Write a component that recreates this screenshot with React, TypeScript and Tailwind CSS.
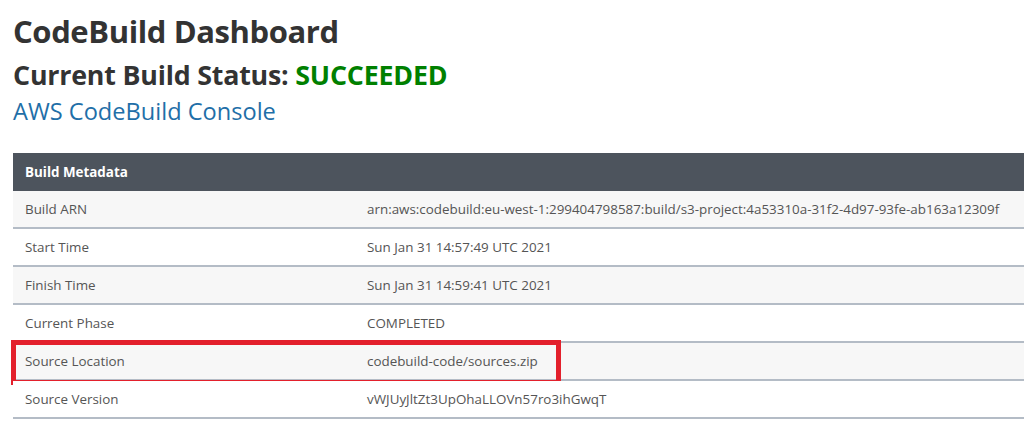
import React from 'react';

const rows = [
    { label: 'Build ARN', value: 'arn:aws:codebuild:eu-west-1:299404798587:build/s3-project:4a53310a-31f2-4d97-93fe-ab163a12309f' },
    { label: 'Start Time', value: 'Sun Jan 31 14:57:49 UTC 2021' },
    { label: 'Finish Time', value: 'Sun Jan 31 14:59:41 UTC 2021' },
    { label: 'Current Phase', value: 'COMPLETED' },
    { label: 'Source Location', value: 'codebuild-code/sources.zip', highlight: true },
    { label: 'Source Version', value: 'vWJUyJltZt3UpOhaLLOVn57ro3ihGwqT' },
];

export default function App() {
    return (
        <div className="w-[1024px] h-[422px] overflow-hidden bg-white pl-[13px] pt-[12px] font-['Open_Sans',sans-serif]">
            <h1 className="text-[31px] font-bold leading-[38px] text-[#333333] tracking-[-0.4px]">
                CodeBuild Dashboard
            </h1>
            <h2 className="mt-[10px] text-[26.8px] font-bold leading-[30px] text-[#333333] tracking-[-0.2px]">
                Current Build Status: <span className="text-[#008000]">SUCCEEDED</span>
            </h2>
            <a href="#" className="mt-[6px] block text-[23.6px] leading-[30px] text-[#1f6fa8]">
                AWS CodeBuild Console
            </a>

            <div className="mt-[27px] text-[13.4px] text-[#555555]">
                <div className="flex h-[38px] items-center bg-[#4d545d] px-3 font-bold text-white">
                    Build Metadata
                </div>
                {rows.map((row, i) => (
                    <div
                        key={row.label}
                        className={`relative grid h-[38px] grid-cols-[354px_1fr] items-center border-b-2 border-[#b4bcc6] ${i % 2 === 0 ? 'bg-[#f7f7f7]' : 'bg-white'}`}
                    >
                        <span className="pl-3">{row.label}</span>
                        <span className="whitespace-nowrap">{row.value}</span>
                        {row.highlight && (
                            <div className="pointer-events-none absolute left-[-2px] top-[-3px] h-[45px] w-[550px] border-[5px] border-[#e3202c]" />
                        )}
                    </div>
                ))}
            </div>
        </div>
    );
}
